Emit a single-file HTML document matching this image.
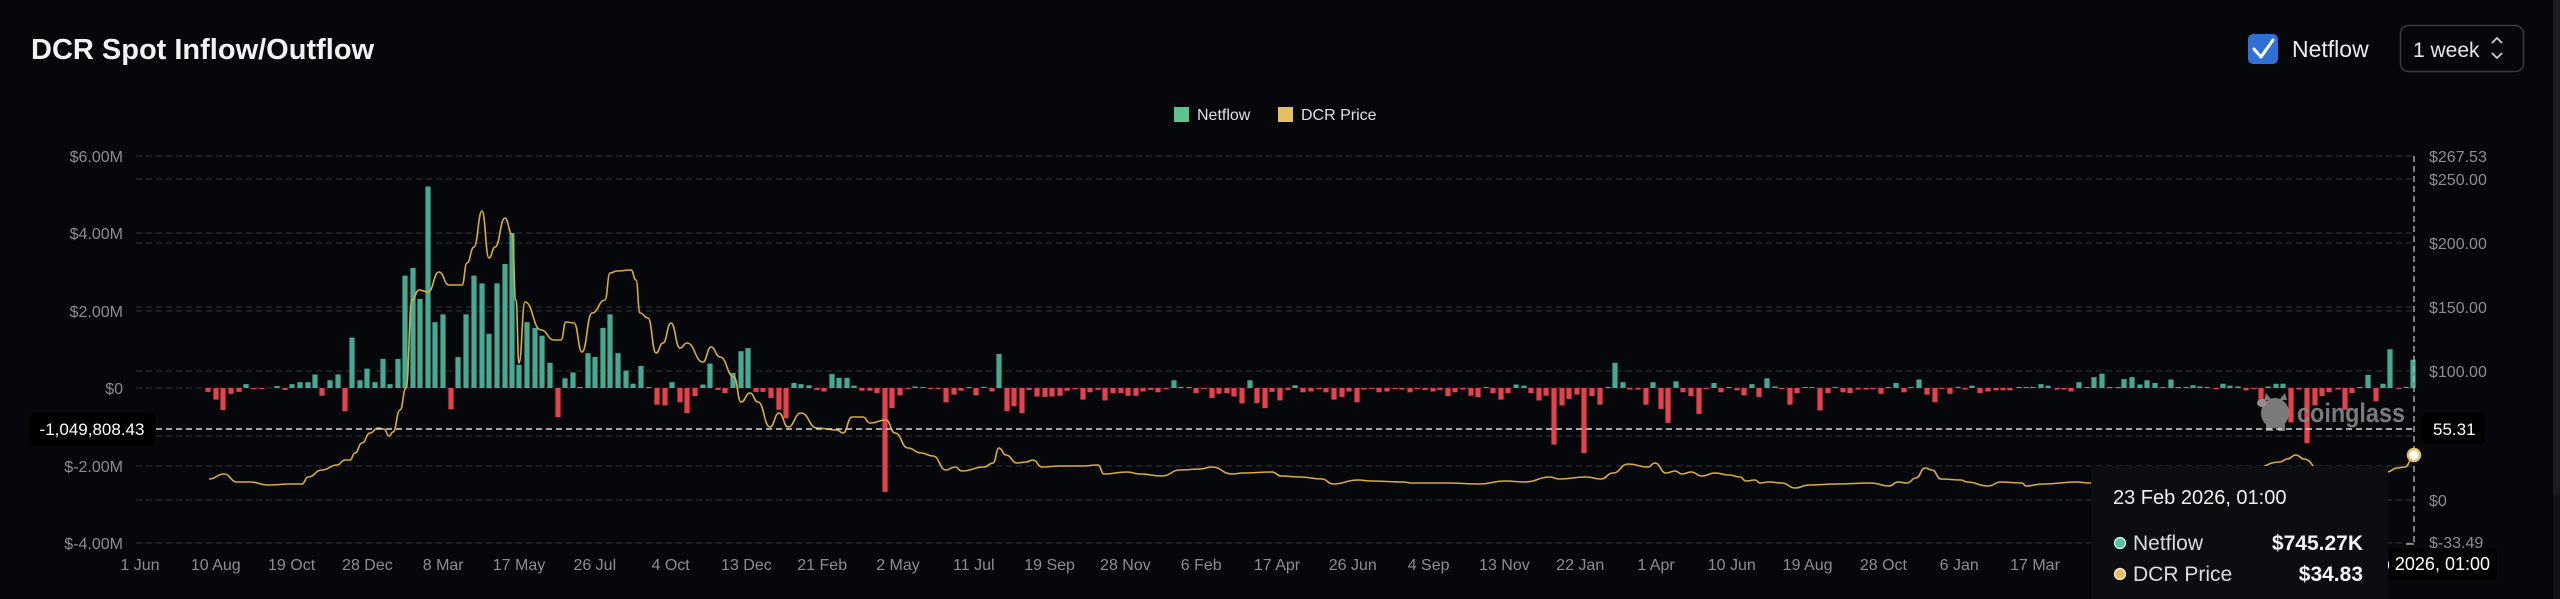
<!DOCTYPE html>
<html><head><meta charset="utf-8">
<style>
html,body{margin:0;padding:0;background:#06070a;}
body{width:2560px;height:599px;overflow:hidden;position:relative;font-family:"Liberation Sans",sans-serif;}
svg{position:absolute;left:0;top:0;}
</style></head>
<body>
<svg id="s" width="2560" height="599" xmlns="http://www.w3.org/2000/svg" font-family="Liberation Sans, sans-serif">
<rect x="0" y="0" width="2560" height="599" fill="#06070a"/>
<rect x="2553" y="0" width="7" height="495" fill="#1b1c20"/>
<rect x="2553" y="495" width="7" height="104" fill="#121317"/>
<text x="31" y="59" font-size="29" font-weight="bold" fill="#f2f2f4">DCR Spot Inflow/Outflow</text>
<rect x="2248" y="34" width="30" height="30" rx="5" fill="#2f6fd6"/>
<path d="M2254 49 L2261 57 L2273 40" stroke="#fff" stroke-width="3" fill="none" stroke-linecap="round" stroke-linejoin="round"/>
<text x="2292" y="57" font-size="23" fill="#ececec">Netflow</text>
<rect x="2400.5" y="25.5" width="123" height="46" rx="8" fill="none" stroke="#3a3c41" stroke-width="1.5"/>
<text x="2413" y="57" font-size="21" fill="#e6e6e6">1 week</text>
<path d="M2492 43 L2497 38 L2502 43 M2492 53 L2497 58 L2502 53" stroke="#ccc" stroke-width="1.8" fill="none"/>
<rect x="1174" y="107" width="15" height="15" fill="#5cc28f"/>
<text x="1197" y="120" font-size="16" fill="#e0e0e0">Netflow</text>
<rect x="1278" y="107" width="15" height="15" fill="#e5bf62"/>
<text x="1301" y="120" font-size="16" fill="#e0e0e0">DCR Price</text>
<g id="grid" stroke="#2b2d31" stroke-width="1.3" stroke-dasharray="6,4"></g>
<g id="bars"></g>
<path id="price" fill="none" stroke="#d8ac3f" stroke-width="1.6"/>
<g font-size="16" fill="#8b8e94" text-anchor="end">
<text x="123" y="162">$6.00M</text>
<text x="123" y="239">$4.00M</text>
<text x="123" y="317">$2.00M</text>
<text x="123" y="394">$0</text>
<text x="123" y="472">$-2.00M</text>
<text x="123" y="549">$-4.00M</text>
</g>
<g font-size="16" fill="#8b8e94">
<text x="2429" y="162">$267.53</text>
<text x="2429" y="185">$250.00</text>
<text x="2429" y="249">$200.00</text>
<text x="2429" y="313">$150.00</text>
<text x="2429" y="377">$100.00</text>
<text x="2429" y="506">$0</text>
<text x="2429" y="548">$-33.49</text>
</g>
<g id="xl" font-size="16" fill="#8b8e94" text-anchor="middle"></g>
<g opacity="0.85">
<ellipse cx="2275" cy="413" rx="14" ry="15" fill="#8f8f8f"/>
<rect x="2266" y="422" width="7" height="9" fill="#8f8f8f"/><rect x="2278" y="422" width="7" height="9" fill="#8f8f8f"/>
<path d="M2264 400 L2266 393 L2271 399 L2280 399 L2285 393 L2287 400 Z" fill="#8f8f8f"/>
<ellipse cx="2262" cy="403" rx="5" ry="4" fill="#b8a0a0"/>
<text x="2297" y="422" font-size="27" font-weight="bold" fill="#8f8f8f" textLength="108" lengthAdjust="spacingAndGlyphs">coinglass</text>
</g>
<line x1="136" y1="429" x2="2414" y2="429" stroke="#d8d8d8" stroke-width="1.5" stroke-dasharray="6,4"/>
<line x1="2414" y1="156" x2="2414" y2="545" stroke="#bbbbbb" stroke-width="1.3" stroke-dasharray="6,4"/>
<line x1="2406" y1="544" x2="2414" y2="544" stroke="#bbbbbb" stroke-width="1.3"/>
<rect x="30" y="413" width="125" height="32" rx="4" fill="#000"/>
<text x="92" y="435" font-size="17" fill="#fff" text-anchor="middle">-1,049,808.43</text>
<rect x="2422" y="413" width="63" height="31" rx="4" fill="#000"/>
<text x="2433" y="435" font-size="17" fill="#fff">55.31</text>
<circle cx="2414" cy="455" r="6" fill="#fff" stroke="#e5bf62" stroke-width="2.5"/>
<rect x="2290" y="548" width="207" height="32" rx="3" fill="#000"/>
<text x="2490" y="570" font-size="18" fill="#fff" text-anchor="end">23 Feb 2026, 01:00</text>
<rect x="2091" y="466" width="297" height="140" rx="4" fill="#0c0d11"/>
<text x="2113" y="504" font-size="20" fill="#f0f0f0">23 Feb 2026, 01:00</text>
<circle cx="2120" cy="543" r="5.5" fill="#5cc0a0" stroke="#cfe" stroke-width="1.2"/>
<text x="2133" y="550" font-size="21" fill="#dcdcdc">Netflow</text>
<text x="2363" y="550" font-size="21" font-weight="bold" fill="#f4f4f4" text-anchor="end">$745.27K</text>
<circle cx="2120" cy="574" r="5.5" fill="#e5bf62" stroke="#fed" stroke-width="1.2"/>
<text x="2133" y="581" font-size="21" fill="#dcdcdc">DCR Price</text>
<text x="2363" y="581" font-size="21" font-weight="bold" fill="#f4f4f4" text-anchor="end">$34.83</text>
</svg>
<script>
var NS="http://www.w3.org/2000/svg";
function el(t,a,p){var e=document.createElementNS(NS,t);for(var k in a)e.setAttribute(k,a[k]);document.getElementById(p).appendChild(e);return e;}
[156,179,233,243,307,311,371,388,436,466,500,543].forEach(function(y){el("line",{x1:136,y1:y,x2:2414,y2:y},"grid");});
var L=["1 Jun","10 Aug","19 Oct","28 Dec","8 Mar","17 May","26 Jul","4 Oct","13 Dec","21 Feb","2 May","11 Jul","19 Sep","28 Nov","6 Feb","17 Apr","26 Jun","4 Sep","13 Nov","22 Jan","1 Apr","10 Jun","19 Aug","28 Oct","6 Jan","17 Mar"];
L.forEach(function(t,i){var e=el("text",{x:140+i*75.8,y:570},"xl");e.textContent=t;});
var B=[[208,-.1],[216,-.3],[223,-.57],[231,-.15],[239,-.1],[246,.1],[254,-.03],[262,-.03],[277,.05],[285,-.05],[292,.1],[300,.15],[308,.15],[315,.35],[322,-.2],[330,.2],[338,.35],[345,-.6],[352,1.3],[360,.2],[367,.5],[375,.15],[383,.75],[390,.1],[398,.75],[405,2.9],[413,3.1],[420,2.3],[428,5.2],[435,1.7],[443,1.9],[451,-.55],[458,.8],[466,1.9],[474,2.9],[482,2.7],[489,1.4],[497,2.7],[505,3.2],[512,4.0],[519,.6],[527,1.7],[535,1.55],[542,1.35],[550,.65],[558,-.75],[565,.25],[573,.4],[580,.02],[588,.9],[595,.8],[603,1.55],[610,1.9],[618,.9],[626,.45],[633,.11],[641,.57],[649,.02],[657,-.43],[665,-.45],[672,.15],[680,-.37],[687,-.65],[695,-.21],[703,.09],[710,.63],[718,-.05],[725,-.13],[733,.39],[741,.95],[748,1.03],[756,-.1],[763,-.1],[771,-.26],[779,-.56],[786,-.78],[794,.13],[801,.1],[809,.07],[817,-.05],[824,-.09],[832,.36],[839,.26],[847,.26],[854,.06],[862,-.07],[870,-.07],[877,-.13],[885,-2.68],[892,-.52],[900,-.19],[908,-.03],[915,.04],[923,.01],[931,-.02],[938,-.02],[946,-.37],[954,-.17],[961,-.07],[969,.02],[976,-.19],[984,.03],[992,-.09],[999,.88],[1007,-.6],[1014,-.47],[1022,-.65],[1029,-.05],[1037,-.22],[1045,-.23],[1052,-.22],[1060,-.2],[1067,-.07],[1075,-.03],[1083,-.3],[1090,-.11],[1098,-.05],[1105,-.32],[1113,-.13],[1121,-.13],[1128,-.2],[1136,-.2],[1143,-.09],[1151,-.05],[1158,-.11],[1166,-.03],[1174,.2],[1181,.03],[1189,.01],[1196,-.13],[1204,-.02],[1212,-.26],[1219,-.15],[1227,-.13],[1234,-.22],[1242,-.4],[1250,.2],[1257,-.39],[1265,-.52],[1272,-.1],[1280,-.32],[1288,-.05],[1295,.07],[1303,-.11],[1311,-.09],[1319,-.03],[1326,-.11],[1334,-.3],[1342,-.23],[1349,-.09],[1357,-.37],[1364,-.04],[1372,-.02],[1379,-.11],[1387,-.09],[1395,-.03],[1402,-.04],[1410,-.11],[1417,-.03],[1425,-.05],[1433,-.09],[1440,-.05],[1448,-.21],[1455,-.11],[1463,-.04],[1471,-.2],[1478,-.24],[1486,.01],[1493,-.13],[1501,-.3],[1508,-.13],[1516,.09],[1524,.06],[1531,-.13],[1539,-.32],[1546,-.2],[1554,-1.46],[1562,-.45],[1569,-.28],[1577,-.17],[1584,-1.68],[1592,-.21],[1600,-.43],[1608,.01],[1615,.65],[1623,.15],[1630,-.04],[1638,-.04],[1646,-.43],[1653,.15],[1661,-.54],[1668,-.9],[1676,.17],[1683,-.11],[1691,-.21],[1699,-.67],[1706,-.03],[1714,.13],[1721,-.11],[1729,.01],[1737,-.06],[1744,-.19],[1752,.1],[1759,-.23],[1767,.25],[1775,.04],[1782,-.02],[1790,-.43],[1797,-.13],[1805,.01],[1812,.02],[1820,-.58],[1828,-.13],[1835,.03],[1843,-.11],[1850,-.13],[1858,-.04],[1866,-.04],[1873,-.03],[1881,-.15],[1888,.01],[1896,.13],[1904,-.11],[1911,.02],[1919,.22],[1927,-.17],[1935,-.37],[1942,-.02],[1950,-.15],[1958,.03],[1965,-.04],[1972,.06],[1980,-.13],[1988,-.09],[1996,-.06],[2003,-.06],[2010,-.06],[2019,.01],[2026,.01],[2033,.01],[2041,.1],[2048,.06],[2057,-.04],[2064,-.04],[2071,-.09],[2079,.15],[2087,.02],[2094,.28],[2102,.37],[2110,.01],[2118,.01],[2124,.23],[2132,.28],[2140,.09],[2147,.2],[2155,.13],[2163,.01],[2171,.22],[2178,.01],[2186,.01],[2193,.07],[2200,.04],[2207,.01],[2216,-.03],[2223,.11],[2230,.06],[2238,.04],[2246,-.06],[2254,-.03],[2261,-.3],[2268,.04],[2276,.11],[2283,.11],[2291,-.89],[2299,-.04],[2307,-1.42],[2315,-.45],[2322,-.21],[2329,-.11],[2338,-.04],[2345,-.56],[2352,-.13],[2360,.01],[2368,.34],[2376,-.34],[2383,.11],[2390,1.0],[2399,-.02],[2406,.03],[2413,.73]];
B.forEach(function(b){var h=Math.max(1,Math.abs(b[1])*38.75);var y=b[1]>=0?388-h:388;el("rect",{x:b[0]-2.6,y:y,width:5.2,height:h,fill:b[1]>=0?"#46a993":"#e5424d"},"bars");});
var P=[[209,479],[224,474],[237,482],[250,482],[268,485],[290,484],[302,484],[308,477],[322,470],[337,465],[345,460],[350,460],[355,453],[362,443],[370,433],[378,428],[384,429],[389,436],[393,432],[400,410],[406,388],[412,300],[419,290],[428,292],[439,272],[449,285],[462,285],[467,263],[474,247],[482,211],[489,258],[495,247],[505,218],[512,234],[516,300],[519,363],[525,302],[541,330],[554,340],[561,340],[566,322],[574,323],[582,352],[592,313],[605,300],[610,273],[617,271],[631,270],[636,280],[640,313],[648,318],[656,353],[663,343],[671,323],[680,348],[687,343],[703,362],[711,347],[720,357],[734,377],[741,402],[750,393],[758,402],[770,427],[779,413],[788,427],[801,413],[817,428],[837,430],[843,433],[852,417],[863,417],[870,423],[886,420],[895,433],[908,448],[921,453],[933,456],[946,470],[955,467],[962,471],[984,467],[993,463],[999,448],[1006,455],[1017,463],[1026,462],[1033,460],[1042,467],[1060,466],[1082,466],[1098,465],[1104,474],[1127,472],[1140,474],[1162,476],[1180,470],[1200,469],[1212,467],[1232,474],[1243,473],[1272,472],[1281,476],[1300,477],[1322,479],[1333,484],[1358,480],[1371,481],[1403,482],[1412,483],[1447,483],[1479,484],[1505,481],[1525,482],[1550,477],[1559,479],[1586,477],[1601,479],[1613,473],[1628,464],[1648,467],[1655,463],[1666,473],[1675,471],[1682,474],[1691,472],[1702,476],[1715,473],[1729,475],[1740,477],[1746,481],[1755,480],[1760,483],[1769,482],[1782,483],[1795,488],[1809,485],[1836,484],[1871,483],[1889,486],[1898,482],[1907,483],[1916,478],[1925,468],[1932,470],[1941,479],[1961,480],[1967,482],[1988,486],[2001,482],[2022,483],[2026,486],[2043,484],[2077,482],[2089,483],[2150,482],[2200,478],[2250,470],[2280,462],[2287,459],[2296,455],[2304,459],[2320,470],[2360,478],[2387,472],[2397,468],[2405,467],[2414,455]];
var d="M"+P[0][0]+" "+P[0][1];
for(var i=1;i<P.length;i++){var p0=P[i-1],p1=P[i],mx=(p0[0]+p1[0])/2;d+=" C"+mx+" "+p0[1]+" "+mx+" "+p1[1]+" "+p1[0]+" "+p1[1];}
document.getElementById("price").setAttribute("d",d);
</script>
</body></html>
